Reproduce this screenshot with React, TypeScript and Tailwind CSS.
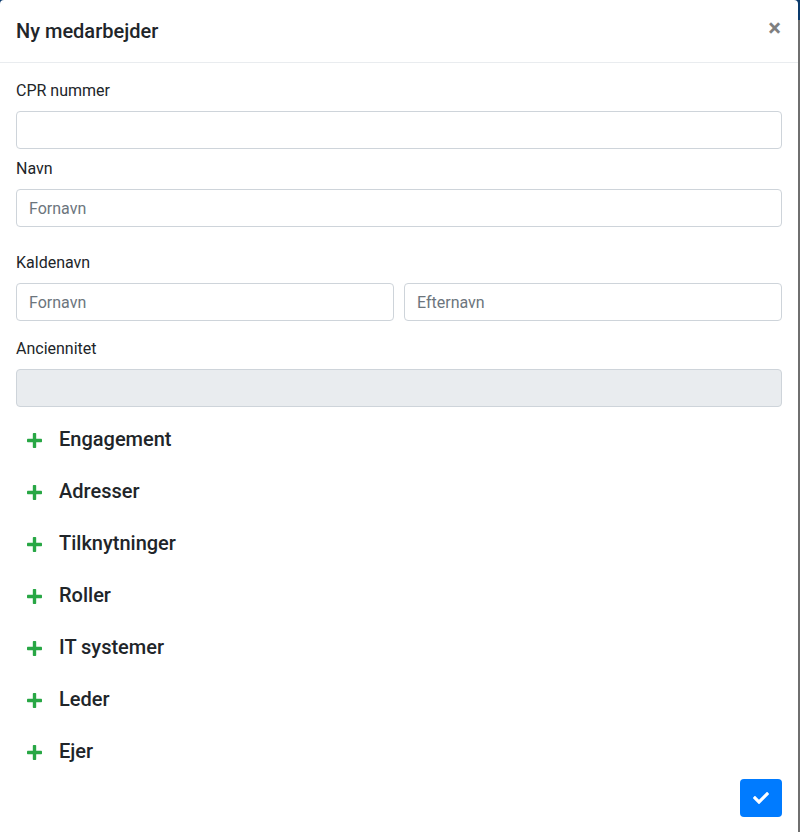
import { useState } from 'react';

const sections = ['Engagement', 'Adresser', 'Tilknytninger', 'Roller', 'IT systemer', 'Leder', 'Ejer'];

function PlusIcon() {
  return (
    <svg viewBox="0 0 16 16" className="h-[15px] w-[15px] fill-[#28a745]">
      <rect x="0" y="6.2" width="16" height="3.6" rx="0.8" />
      <rect x="6.2" y="0" width="3.6" height="16" rx="0.8" />
    </svg>
  );
}

function CheckIcon() {
  return (
    <svg viewBox="0 0 512 512" className="h-[16px] w-[16px] fill-white">
      <path d="M173.898 439.404l-166.4-166.4c-9.997-9.997-9.997-26.206 0-36.204l36.203-36.204c9.997-9.998 26.207-9.998 36.204 0L192 312.69 432.095 72.596c9.997-9.997 26.207-9.997 36.204 0l36.203 36.204c9.997 9.997 9.997 26.206 0 36.204l-294.4 294.401c-9.998 9.997-26.207 9.997-36.204-.001z" />
    </svg>
  );
}

const inputCls =
  'block h-[38px] w-full rounded-[4px] border border-[#ced4da] px-3 text-base text-[#495057] placeholder:text-[#6c757d] outline-none';

export default function App() {
  const [cpr, setCpr] = useState('');

  return (
    <div className="relative flex h-[832px] w-[800px] flex-col overflow-hidden bg-[#6f6f6f] font-['Roboto',sans-serif] text-[#212529]">
      <div className="h-[20px] bg-[#0a3a6c]" />
      <div className="flex-1" />

      {/* modal */}
      <div className="absolute left-0 top-0 flex h-[840px] w-[798px] flex-col rounded-[4px] bg-white">
        <div className="flex h-[63px] items-center justify-between border-b border-[#e9ecef] pl-[16px] pr-[17px]">
          <h5 className="text-[20px] font-medium leading-6">Ny medarbejder</h5>
          <button className="mb-[6px] text-[24px] font-bold leading-none text-black/50">×</button>
        </div>

        <div className="flex flex-col px-[16px] pt-[16px]">
          <label className="mb-2 leading-6">CPR nummer</label>
          <input className={`${inputCls} bg-white`} value={cpr} onChange={(e) => setCpr(e.target.value)} />

          <label className="mb-2 mt-2 leading-6">Navn</label>
          <input className={`${inputCls} bg-white`} placeholder="Fornavn" />

          <label className="mb-2 mt-[24px] leading-6">Kaldenavn</label>
          <div className="grid grid-cols-2 gap-[10px]">
            <input className={`${inputCls} bg-white`} placeholder="Fornavn" />
            <input className={`${inputCls} bg-white`} placeholder="Efternavn" />
          </div>

          <label className="mb-2 mt-[16px] leading-6">Anciennitet</label>
          <input className={`${inputCls} bg-[#e9ecef]`} disabled />

          <div className="mt-[20px] flex flex-col gap-[28px]">
            {sections.map((s) => (
              <div key={s} className="flex items-center">
                <div className="flex w-[43px] justify-start pl-[11px] pt-[3px]">
                  <PlusIcon />
                </div>
                <h5 className="text-[20px] font-medium leading-6">{s}</h5>
              </div>
            ))}
          </div>

          <div className="mt-[16px] flex justify-end">
            <button className="flex h-[38px] w-[42px] items-center justify-center rounded-[4px] bg-[#007bff]">
              <CheckIcon />
            </button>
          </div>
        </div>
      </div>
    </div>
  );
}
